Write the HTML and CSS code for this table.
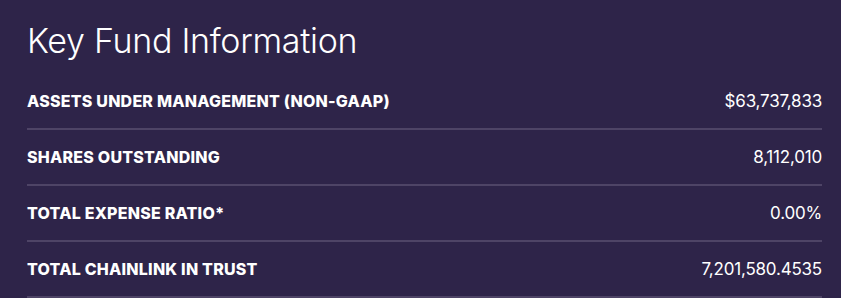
FILE: index.html
```html
<!DOCTYPE html>
<html>
<head>
<meta charset="utf-8">
<link rel="stylesheet" href="styles.css">
</head>
<body>
<section class="fund">
  <h2 class="fund-title">Key Fund Information</h2>
  <div class="fund-rows">
    <div class="fund-row"><span class="label">ASSETS UNDER MANAGEMENT (NON-GAAP)</span><span class="value">$63,737,833</span></div>
    <div class="fund-row"><span class="label">SHARES OUTSTANDING</span><span class="value">8,112,010</span></div>
    <div class="fund-row"><span class="label">TOTAL EXPENSE RATIO*</span><span class="value">0.00%</span></div>
    <div class="fund-row"><span class="label">TOTAL CHAINLINK IN TRUST</span><span class="value">7,201,580.4535</span></div>
  </div>
</section>
</body>
</html>
```

FILE: styles.css
```css
html, body {
  margin: 0;
  padding: 0;
  background: #2e2449;
}
body {
  font-family: "Inter", "Liberation Sans", sans-serif;
  color: #ffffff;
}
.fund {
  padding: 21px 19px 0 27px;
}
.fund-title {
  margin: 0 0 13px 0;
  font-size: 34px;
  line-height: 40px;
  font-weight: 300;
  letter-spacing: -0.3px;
}
.fund-rows {
  display: flex;
  flex-direction: column;
}
.fund-row {
  display: flex;
  justify-content: space-between;
  align-items: center;
  height: 54px;
  border-bottom: 2px solid #4e4466;
}
.label {
  font-size: 16px;
  font-weight: 800;
  letter-spacing: 0.22px;
}
.value {
  font-size: 17px;
  font-weight: 400;
  letter-spacing: -0.2px;
}
```
